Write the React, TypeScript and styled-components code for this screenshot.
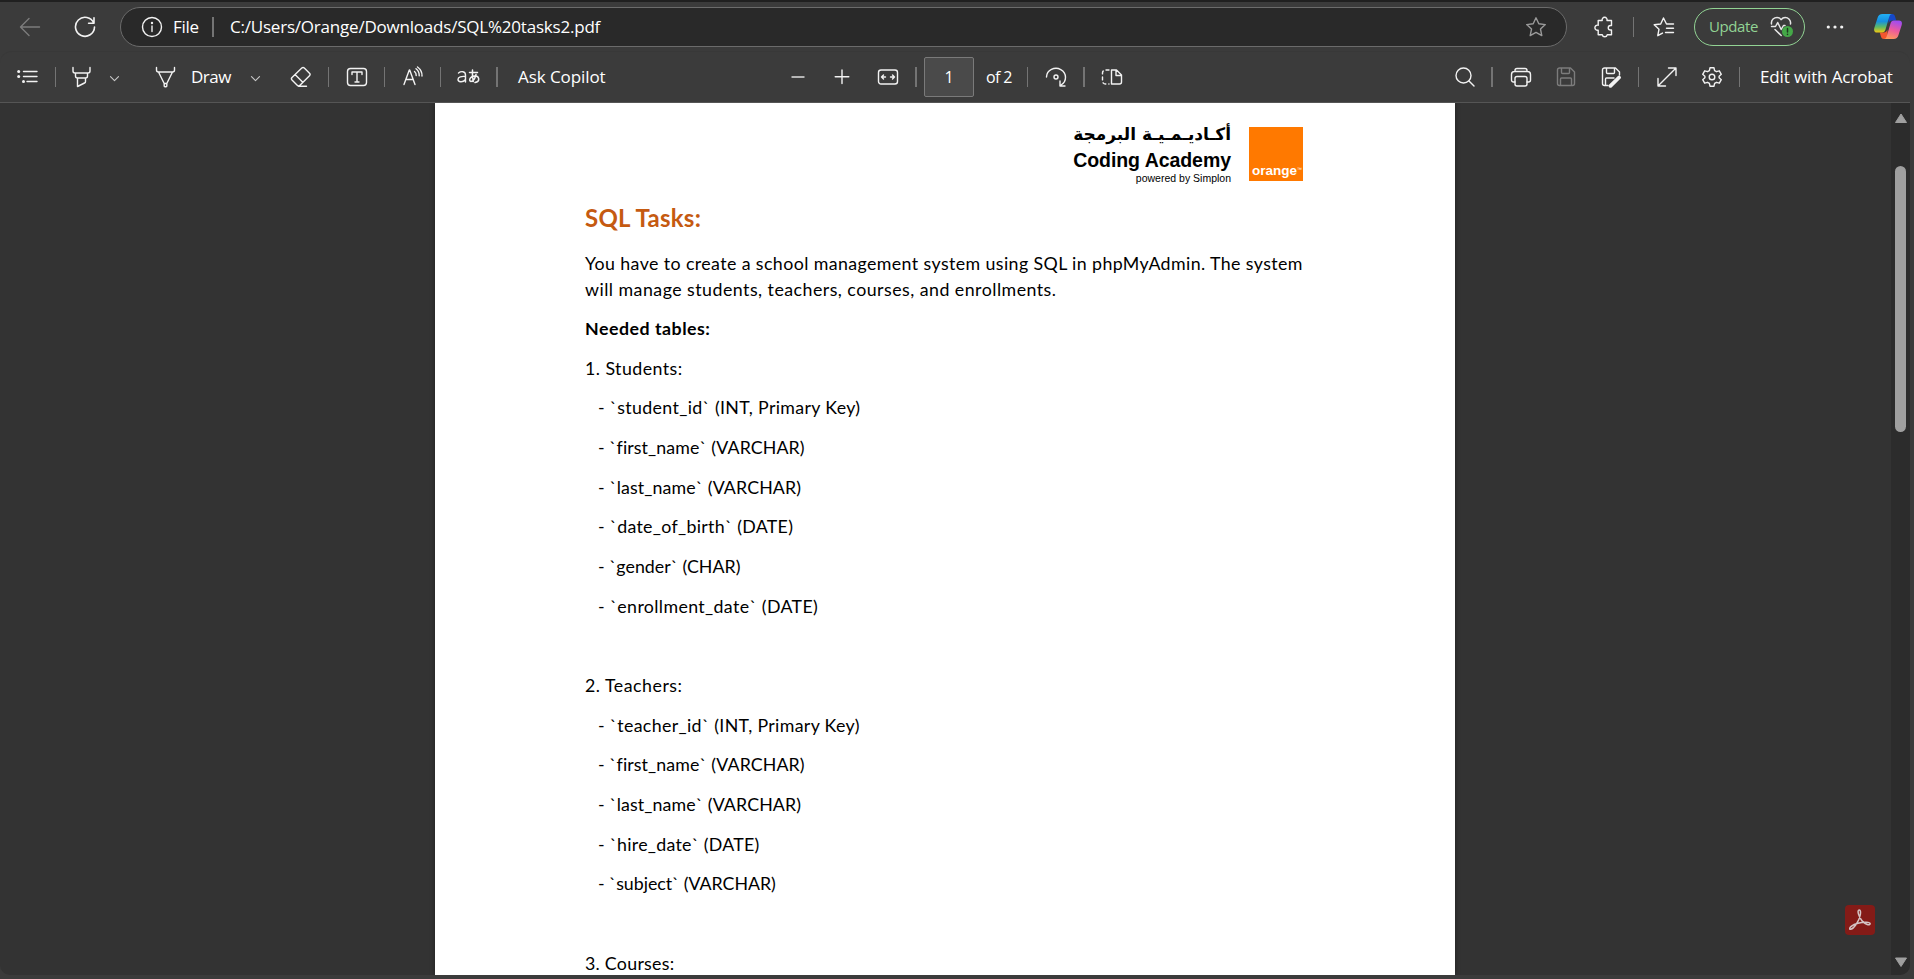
import React from "react";
import styled, { createGlobalStyle } from "styled-components";

const Global = createGlobalStyle`
  html, body { margin: 0; background: #3b3b3b; overflow: hidden; }
  * { box-sizing: border-box; }
`;

const Shell = styled.div`
  width: 1914px;
  height: 979px;
  display: flex;
  flex-direction: column;
  background: #3b3b3b;
  color: #fff;
  font-family: "Open Sans", "Noto Sans", sans-serif;
  overflow: hidden;
`;
const NavBar = styled.div`
  height: 51px;
  flex: none;
  display: flex;
  align-items: center;
  border-top: 2px solid #202020;
`;
const AddressBar = styled.div`
  width: 1447px;
  height: 40px;
  margin: 1px 0 0 24px;
  flex: none;
  display: flex;
  align-items: center;
  background: #292929;
  border: 1px solid #6b6b6b;
  border-radius: 20px;
`;
const ToolBar = styled.div`
  height: 52px;
  flex: none;
  display: flex;
  align-items: center;
  border-top: 1px solid #383838;
  border-bottom: 1px solid #555;
  border-radius: 12px 12px 0 0;
  width: 1910px;
`;
const Slot = styled.div<{ $gap: number; $dim?: boolean }>`
  flex: none;
  display: flex;
  margin-left: ${(p) => p.$gap}px;
  color: ${(p) => (p.$dim ? "#7c7c7c" : "#f2f2f2")};
`;
const Divider = styled.div<{ $gap: number; $w?: number }>`
  flex: none;
  width: ${(p) => p.$w ?? 1}px;
  height: 20px;
  margin-left: ${(p) => p.$gap}px;
  background: #747474;
`;
const Label = styled.div<{ $gap: number; $w: number; $size?: number; $ls?: number; $color?: string; $lift?: number }>`
  flex: none;
  width: ${(p) => p.$w}px;
  margin-left: ${(p) => p.$gap}px;
  margin-bottom: ${(p) => p.$lift ?? 0}px;
  font-size: ${(p) => p.$size ?? 17}px;
  line-height: 24px;
  letter-spacing: ${(p) => p.$ls ?? 0}px;
  color: ${(p) => p.$color ?? "#fff"};
  white-space: nowrap;
`;
const PageBox = styled.div`
  flex: none;
  width: 50px;
  height: 40px;
  margin-left: 7px;
  display: flex;
  align-items: center;
  justify-content: center;
  background: #4a4a4a;
  border: 1px solid #7a7a7a;
  border-radius: 2px;
  font-size: 16px;
`;
const UpdatePill = styled.div`
  flex: none;
  width: 111px;
  height: 38px;
  margin-left: 19px;
  margin-top: 1px;
  display: flex;
  align-items: center;
  border: 1px solid #92d394;
  border-radius: 19px;
`;
const Viewer = styled.div`
  width: 1910px;
  height: 872px;
  flex: none;
  display: flex;
  background: #333;
  border-radius: 0 0 10px 10px;
  overflow: hidden;
`;
const Canvas = styled.div`
  flex: 1;
  display: flex;
  padding-left: 435px;
  position: relative;
`;
const Sheet = styled.div`
  width: 1020px;
  background: #fff;
  color: #000;
  padding: 19px 0 0 150px;
  font-family: Lato, sans-serif;
  box-shadow: 0 0 5px rgba(0, 0, 0, 0.4);
`;
const LogoRow = styled.div`
  display: flex;
  width: 718px;
  height: 76px;
  justify-content: flex-end;
`;
const LogoText = styled.div`
  display: flex;
  flex-direction: column;
  align-items: flex-end;
  margin-right: 18px;
  font-family: "Liberation Sans", sans-serif;
  white-space: nowrap;
`;
const Arabic = styled.div`
  font: bold 17px/24px "DejaVu Sans", sans-serif;
  direction: rtl;
  height: 26px;
`;
const LogoName = styled.div`
  font-weight: bold;
  font-size: 19.5px;
  line-height: 24px;
  height: 23px;
  letter-spacing: -0.05px;
`;
const LogoBy = styled.div`
  font-size: 10.5px;
  line-height: 14px;
`;
const OrangeBox = styled.div`
  width: 54px;
  height: 54px;
  margin-top: 5px;
  background: #ff7900;
  color: #fff;
  display: flex;
  align-items: flex-end;
  padding: 0 0 2px 3px;
  font: bold 13.5px/16px "Liberation Sans", sans-serif;
`;
const Tm = styled.span`
  font-size: 5px;
  font-weight: 400;
  line-height: 20px;
  align-self: flex-end;
`;
const Title = styled.h1`
  margin: 0;
  height: 40px;
  font-size: 24px;
  line-height: 40px;
  font-weight: 700;
  color: #c55a11;
  letter-spacing: 0.27px;
`;
const Intro = styled.div`
  padding-top: 12px;
  height: 77px;
`;
const Line = styled.div<{ $ls?: number; $bold?: boolean; $indent?: boolean; $h?: number }>`
  height: ${(p) => p.$h ?? 39.67}px;
  line-height: 26px;
  font-size: 17.8px;
  font-weight: ${(p) => (p.$bold ? 700 : 400)};
  padding-left: ${(p) => (p.$indent ? 13 : 0)}px;
  letter-spacing: ${(p) => p.$ls ?? 0}px;
  white-space: nowrap;
  font-variant-ligatures: none;
`;
const ScrollTrack = styled.div`
  width: 19px;
  display: flex;
  flex-direction: column;
  align-items: center;
  justify-content: space-between;
  padding: 10px 0 8px;
  background: #2c2c2c;
`;
const ScrollThumb = styled.div`
  width: 11px;
  height: 266px;
  margin-top: 43px;
  border-radius: 6px;
  background: #9f9f9f;
`;
const ScrollTop = styled.div`
  display: flex;
  flex-direction: column;
  align-items: center;
`;
const AcrobatBadge = styled.div`
  position: absolute;
  left: 1845px;
  top: 802px;
  width: 30px;
  height: 30px;
  border-radius: 4px;
  background: #841b17;
`;

type IconProps = { w?: number; h?: number; sw?: number; children: React.ReactNode };
const Icon = ({ w = 22, h = 22, sw = 1.4, children }: IconProps) => (
  <svg width={w} height={h} viewBox={`0 0 ${w} ${h}`} fill="none" stroke="currentColor" strokeWidth={sw} strokeLinecap="round" strokeLinejoin="round">
    {children}
  </svg>
);
const Chevron = () => (
  <Icon w={12} h={12} sw={1.1}>
    <path stroke="#c8c8c8" d="M1.500 5.700 5.500 9.700l4-4" />
  </Icon>
);
const floppy = "M4.500 2h11l4 4v11.500a2 2 0 0 1-2 2h-13a2 2 0 0 1-2-2V4a2 2 0 0 1 2-2ZM6.500 2v4.500a1 1 0 0 0 1 1h6a1 1 0 0 0 1-1V2M5.500 19.500v-6.500a1 1 0 0 1 1-1h9a1 1 0 0 1 1 1v6.500";

const CopilotLogo = () => (
  <svg width="28" height="27" viewBox="0 0 28 27">
    <defs>
      <linearGradient id="cpBlue" x1="0" y1="0" x2="0" y2="1">
        <stop offset="0" stopColor="#22b0f5" />
        <stop offset="0.4" stopColor="#168fe0" />
        <stop offset="0.7" stopColor="#5cba67" />
        <stop offset="1" stopColor="#f2c811" />
      </linearGradient>
      <linearGradient id="cpPink" x1="0.6" y1="0" x2="0.3" y2="1">
        <stop offset="0" stopColor="#a04cf0" />
        <stop offset="0.5" stopColor="#ee5a9c" />
        <stop offset="1" stopColor="#ff9a5a" />
      </linearGradient>
    </defs>
    <path d="M14 1h4c2 0 2.700 1.300 3.200 3l1 3.500h-4c-2 0-3 1-3.500 3z" fill="#1648c8" />
    <path d="M14 26h-4c-2 0-2.700-1.300-3.200-3l-1-3.500h4c2 0 3-1 3.500-3z" fill="#f2562f" />
    <path d="M8.500 1H18c-1.500 0-2.200 1-2.800 3l-3.700 12.500c-.6 2-1.500 3-3.500 3H3c-2.400 0-3.400-1.500-2.700-4.500L3.500 5C4.200 2.500 5.800 1 8.500 1Z" fill="url(#cpBlue)" />
    <path d="M19.500 26H10c1.500 0 2.200-1 2.800-3l3.700-12.500c.6-2 1.500-3 3.500-3h5c2.400 0 3.400 1.500 2.700 4.500L24.500 22c-.7 2.500-2.300 4-5 4Z" fill="url(#cpPink)" />
  </svg>
);

type Row = { text: string; ls?: number; head?: boolean };
const rows: Row[] = [
  { text: "1. Students:", ls: 0.45, head: true },
  { text: "- `student_id` (INT, Primary Key)", ls: 0.34 },
  { text: "- `first_name` (VARCHAR)", ls: 0.1 },
  { text: "- `last_name` (VARCHAR)", ls: 0.12 },
  { text: "- `date_of_birth` (DATE)", ls: 0.3 },
  { text: "- `gender` (CHAR)", ls: 0.03 },
  { text: "- `enrollment_date` (DATE)", ls: 0.36 },
  { text: "" },
  { text: "2. Teachers:", ls: 0.5, head: true },
  { text: "- `teacher_id` (INT, Primary Key)", ls: 0.34 },
  { text: "- `first_name` (VARCHAR)", ls: 0.1 },
  { text: "- `last_name` (VARCHAR)", ls: 0.12 },
  { text: "- `hire_date` (DATE)", ls: 0.26 },
  { text: "- `subject` (VARCHAR)", ls: -0.03 },
  { text: "" },
  { text: "3. Courses:", ls: 0.27, head: true },
];

export default function App() {
  return (
    <Shell>
      <Global />
      <NavBar>
        <Slot $gap={19} $dim>
          <Icon><path d="M20.500 11H1.500M10 2.500 1.500 11l8.500 8.500" /></Icon>
        </Slot>
        <Slot $gap={33}>
          <Icon sw={1.6}><path d="M19.800 7.200A9.500 9.500 0 1 0 20.500 11M20 1.800v5.400h-5.400" /></Icon>
        </Slot>
        <AddressBar>
          <Slot $gap={20}>
            <Icon>
              <circle cx="11" cy="11" r="9.500" />
              <path d="M11 10v5.500" />
              <circle cx="11" cy="7" r=".5" fill="currentColor" />
            </Icon>
          </Slot>
          <Label $gap={10} $w={27} $size={17} $ls={-0.3} $lift={1}>File</Label>
          <Divider $gap={12} $w={2} />
          <Label $gap={16} $w={1280} $size={17} $ls={-0.21} $lift={1}>C:/Users/Orange/Downloads/SQL%20tasks2.pdf</Label>
          <Slot $gap={15}>
            <Icon><path stroke="#9a9a9a" d="m11 1.800 2.800 6 6.500.8-4.800 4.500 1.300 6.500L11 16.400l-5.800 3.200 1.300-6.500L1.700 8.600l6.500-.8Z" /></Icon>
          </Slot>
        </AddressBar>
        <Slot $gap={26}>
          <Icon><path d="M7 4.500h2.200a2.500 2.500 0 1 1 4.800 0h4.500v5h-1a2.200 2.200 0 1 0 0 4.500h1v4.800h-4.300a2.500 2.500 0 0 1-4.900 0H5.200v-4.600a2.600 2.600 0 1 1 0-5V4.500Z" /></Icon>
        </Slot>
        <Divider $gap={18} />
        <Slot $gap={19}>
          <Icon><path d="M20.500 8h-7l-3-6-2.800 6-6.500.8 4.800 4.400-1.200 6.500 4.700-2.600M13.500 12.200h7M12.500 16.500h8" /></Icon>
        </Slot>
        <UpdatePill>
          <Label $gap={14} $w={50} $size={15} $ls={-0.4} $color="#92d394" $lift={2}>Update</Label>
          <Slot $gap={11}>
            <svg width="24" height="22" viewBox="0 0 24 22" fill="none" stroke="#e6e6e6" strokeWidth="1.500" strokeLinecap="round" strokeLinejoin="round">
              <path d="M1.500 8C.8 3.500 4.500 1.500 7 1.500c2 0 3.200 1 4 2.200 1-1.200 2.200-2.200 4.200-2.200 2.800 0 6 2.300 5.300 6.500M1.500 10.500h4l2.200-4 3.500 7 2.300-4H15M5 13.500l6.200 6" />
              <circle cx="17.500" cy="15.500" r="5.500" fill="#45a848" stroke="none" />
              <path d="M17.500 12.500v3.500M17.500 18.300v.1" stroke="#1f3a20" />
            </svg>
          </Slot>
        </UpdatePill>
        <Slot $gap={21}>
          <Icon w={18}>
            <g fill="currentColor" stroke="none"><circle cx="2.300" cy="11" r="1.600" /><circle cx="9" cy="11" r="1.600" /><circle cx="15.700" cy="11" r="1.600" /></g>
          </Icon>
        </Slot>
        <Slot $gap={30}><CopilotLogo /></Slot>
      </NavBar>

      <ToolBar>
        <Slot $gap={17}>
          <Icon>
            <path d="M6.500 5.500H20M6.500 10.500H20M10 15.500h10" />
            <g fill="currentColor" stroke="none"><circle cx="1.700" cy="5.500" r="1.500" /><circle cx="1.700" cy="10.500" r="1.500" /><circle cx="6.500" cy="15.500" r="1.500" /></g>
          </Icon>
        </Slot>
        <Divider $gap={16} />
        <Slot $gap={15}>
          <Icon><path d="M2 1.500V5a2 2 0 0 0 2 2h13a2 2 0 0 0 2-2V1.500M4.500 7v3a2 2 0 0 0 2 2h8a2 2 0 0 0 2-2V7M6.500 12v8.500l7-3.500a1.500 1.500 0 0 0 1-1.500V12" /></Icon>
        </Slot>
        <Slot $gap={16}><Chevron /></Slot>
        <Slot $gap={34}>
          <Icon><path d="M1.500 1.500V4a2 2 0 0 0 2 2h14a2 2 0 0 0 2-2V1.500M3.500 6l5.700 11.500V20a.8.8 0 0 0 .8.800h1a.8.8 0 0 0 .8-.8v-2.500L17.500 6M9.200 17.500h2.600" /></Icon>
        </Slot>
        <Label $gap={14} $w={40} $ls={-0.5}>Draw</Label>
        <Slot $gap={19}><Chevron /></Slot>
        <Slot $gap={28}>
          <Icon><path d="M2 11.500 11.800 2a1.800 1.800 0 0 1 2.500 0l5.200 5.200a1.800 1.800 0 0 1 0 2.500L10 19.200a2 2 0 0 1-2.800 0L2 14a1.800 1.800 0 0 1 0-2.500ZM5 8.500l7.800 7.800M8.500 20.300h8" /></Icon>
        </Slot>
        <Divider $gap={16} />
        <Slot $gap={17}>
          <Icon><rect x="1.500" y="2.500" width="19" height="17" rx="3" /><path d="M6 8.500V6h10v2.500M11 6v10M9 16h4" /></Icon>
        </Slot>
        <Divider $gap={16} />
        <Slot $gap={17}>
          <Icon><path d="m2 18.500 5.300-14.500h.4L13 18.500M4 13.500h7M12.500 5.500c1.200 1 1.800 2.500 1.700 4M14 2.800c2.200 1.800 3.300 4.200 3.200 7M15.500 1c3.300 2.500 4.700 5.500 4.500 9" /></Icon>
        </Slot>
        <Divider $gap={16} />
        <Slot $gap={15}>
          <Icon w={26}>
            <path d="M2.500 7c2.500-2 7-2 7 2v7M9.500 10.500c-4-.5-7.500.5-7.500 3s4.500 3.500 7.500 0" />
            <path strokeWidth="1.500" d="M13.500 6.500h8M16.500 4c-.3 4-.3 7 .8 11.500M20 8.500c-1 4-3 7-5 7-2.500-.5-1.500-5 3.500-5.500 5-.3 6 5.500.5 6.500" />
          </Icon>
        </Slot>
        <Divider $gap={14} $w={2} />
        <Label $gap={20} $w={88} $ls={-0.08}>Ask Copilot</Label>

        <Slot $gap={184}><Icon w={16}><path strokeLinecap="butt" strokeWidth="2" stroke="#b5b5b5" d="M1.500 11h13" /></Icon></Slot>
        <Slot $gap={28}><Icon w={16}><path d="M8 4v13.500M1.200 10.700h13.600" /></Icon></Slot>
        <Slot $gap={27}>
          <Icon><rect x="1.500" y="4" width="19" height="14" rx="2.500" /><path d="M4.500 11h4M6.500 9l-2 2 2 2M17.500 11h-4M15.500 9l2 2-2 2" /></Icon>
        </Slot>
        <Divider $gap={16} $w={2} />
        <PageBox>1</PageBox>
        <Label $gap={12} $w={28} $size={16} $ls={-0.6}>of 2</Label>
        <Divider $gap={13} />
        <Slot $gap={17}>
          <Icon><path d="M1.500 11a9.500 9 0 1 1 14.500 8M15 15v5h5" /><circle cx="11" cy="11" r="2" /></Icon>
        </Slot>
        <Divider $gap={16} $w={2} />
        <Slot $gap={16}>
          <Icon>
            <path d="M10.500 4h5l5 5v7a2 2 0 0 1-2 2h-8ZM15 4v5.500h5.500" />
            <path strokeDasharray="3 3" d="M8 4H4.500a3 3 0 0 0-3 3v8a3 3 0 0 0 3 3H8" />
          </Icon>
        </Slot>

        <Slot $gap={331}><Icon><circle cx="9.500" cy="9.500" r="7.500" /><path d="m15 15 5 5" /></Icon></Slot>
        <Divider $gap={15} $w={2} />
        <Slot $gap={17}>
          <Icon><path d="M5 16H3.500a2 2 0 0 1-2-2V8.500a3 3 0 0 1 3-3h13a3 3 0 0 1 3 3V14a2 2 0 0 1-2 2H17M5 5.500v-1a2 2 0 0 1 2-2h8a2 2 0 0 1 2 2v1" /><rect x="5" y="10.500" width="12" height="9.500" rx="2" /></Icon>
        </Slot>
        <Slot $gap={23} $dim><Icon><path d={floppy} /></Icon></Slot>
        <Slot $gap={23}>
          <Icon>
            <path d="M8 19.500H4.500a2 2 0 0 1-2-2V4a2 2 0 0 1 2-2h11l4 4v3M6.500 2v4.500a1 1 0 0 0 1 1h6a1 1 0 0 0 1-1V2M5.500 19.500v-6.500a1 1 0 0 1 1-1H14" />
            <path d="m10.500 19.800 8.500-8.300" strokeWidth="3.800" />
          </Icon>
        </Slot>
        <Divider $gap={16} />
        <Slot $gap={17}><Icon><path d="M2 20 20 2M12.500 2H20v7.500M2 12.500V20h7.500" /></Icon></Slot>
        <Slot $gap={23}>
          <Icon><path d="M9 1.800h4l.6 2.800 1.900 1.100 2.800-.9 2 3.500-2.200 1.900v1.600l2.200 1.900-2 3.500-2.800-.9-1.900 1.100-.6 2.800H9l-.6-2.800-1.900-1.100-2.800.9-2-3.500 2.200-1.900v-1.600L1.700 8.300l2-3.500 2.800.9 1.900-1.100Z" /><circle cx="11" cy="11" r="2.800" /></Icon>
        </Slot>
        <Divider $gap={16} />
        <Label $gap={20} $w={134} $ls={-0.13}>Edit with Acrobat</Label>
      </ToolBar>

      <Viewer>
        <Canvas>
          <Sheet>
            <LogoRow>
              <LogoText>
                <Arabic>أكـاديـمـيـة البرمجة</Arabic>
                <LogoName>Coding Academy</LogoName>
                <LogoBy>powered by Simplon</LogoBy>
              </LogoText>
              <OrangeBox>orange<Tm>™</Tm></OrangeBox>
            </LogoRow>
            <Title>SQL Tasks:</Title>
            <Intro>
              <Line $h={26} $ls={0.4}>You have to create a school management system using SQL in phpMyAdmin. The system</Line>
              <Line $h={26} $ls={0.47}>will manage students, teachers, courses, and enrollments.</Line>
            </Intro>
            <Line $bold $ls={0.5}>Needed tables:</Line>
            {rows.map((r, i) => (
              <Line key={i} $indent={!r.head} $ls={r.ls}>{r.text}</Line>
            ))}
          </Sheet>
          <AcrobatBadge>
            <svg width="30" height="30" viewBox="0 0 30 30" fill="none" stroke="#d4c4c4" strokeWidth="1.500">
              <path d="M14.300 5c2.500 0 1 8-2.300 13-2.500 4-5.500 6.500-7 6.300-1.500-1.200 2-4.500 8-6 6-1.500 12-1.200 12.200.5-.2 2.200-5 .700-8.200-3-3-3.500-5.500-10.800-2.700-10.800Z" />
            </svg>
          </AcrobatBadge>
        </Canvas>
        <ScrollTrack>
          <ScrollTop>
            <svg width="12" height="10" viewBox="0 0 12 10"><path d="M6 1 11.500 9.500H.5Z" fill="#9f9f9f" stroke="#9f9f9f" strokeLinejoin="round" /></svg>
            <ScrollThumb />
          </ScrollTop>
          <svg width="12" height="10" viewBox="0 0 12 10"><path d="M6 9.500 11.500 1H.5Z" fill="#9f9f9f" stroke="#9f9f9f" strokeLinejoin="round" /></svg>
        </ScrollTrack>
      </Viewer>
    </Shell>
  );
}
